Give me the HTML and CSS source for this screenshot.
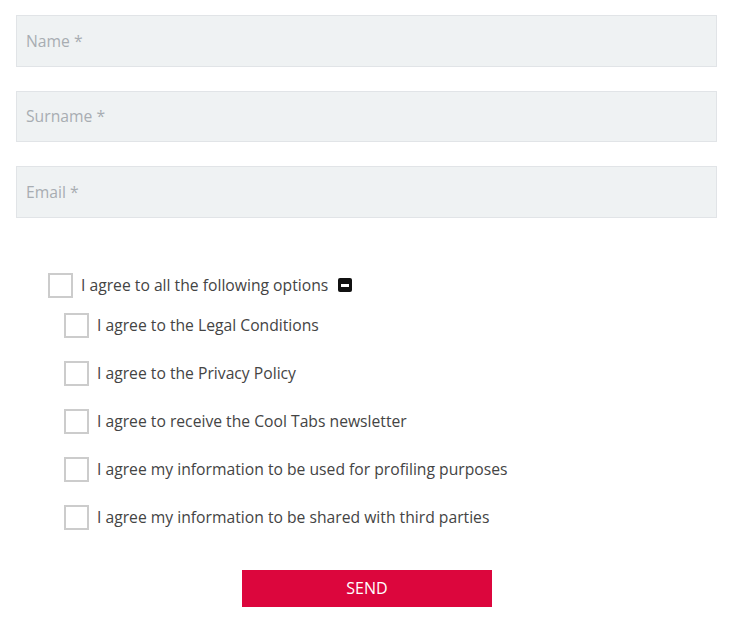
FILE: index.html
```html
<!DOCTYPE html>
<html lang="en">
<head>
<meta charset="utf-8">
<title>Form</title>
<link rel="stylesheet" href="styles.css">
</head>
<body>
<form class="form">
  <div class="fields">
    <input class="field" type="text" placeholder="Name *">
    <input class="field" type="text" placeholder="Surname *">
    <input class="field" type="email" placeholder="Email *">
  </div>
  <div class="consents">
    <label class="check check-all">
      <input class="box" type="checkbox">
      <span class="text">I agree to all the following options</span>
      <span class="toggle"><span class="bar"></span></span>
    </label>
    <div class="options">
      <label class="check"><input class="box" type="checkbox"><span class="text">I agree to the Legal Conditions</span></label>
      <label class="check"><input class="box" type="checkbox"><span class="text">I agree to the Privacy Policy</span></label>
      <label class="check"><input class="box" type="checkbox"><span class="text">I agree to receive the Cool Tabs newsletter</span></label>
      <label class="check"><input class="box" type="checkbox"><span class="text">I agree my information to be used for profiling purposes</span></label>
      <label class="check"><input class="box" type="checkbox"><span class="text">I agree my information to be shared with third parties</span></label>
    </div>
  </div>
  <div class="actions">
    <button class="send" type="button">SEND</button>
  </div>
</form>
</body>
</html>
```
FILE: styles.css
```css
html, body {
  margin: 0;
  padding: 0;
  background: #ffffff;
}
body {
  font-family: "Open Sans", "Liberation Sans", sans-serif;
  color: #444444;
}
.form {
  padding: 15px 15px 0 16px;
}
.fields {
  display: flex;
  flex-direction: column;
  gap: 24px;
}
.field {
  box-sizing: border-box;
  width: 701px;
  height: 51.5px;
  margin: 0;
  padding: 0 9px;
  border: 1px solid #e1e4e7;
  background: #eff2f3;
  font-family: inherit;
  font-size: 15.7px;
  color: #444;
  outline: none;
}
.field::placeholder {
  color: #a8adb2;
}
.consents {
  margin-top: 55px;
  padding-left: 32px;
}
.check {
  display: flex;
  align-items: center;
  height: 25px;
  font-size: 15.7px;
  color: #444;
}
.box {
  appearance: none;
  -webkit-appearance: none;
  box-sizing: border-box;
  width: 25px;
  height: 25px;
  margin: 0 8px 0 0;
  border: 2px solid #cccccc;
  background: #fff;
  flex: none;
}
.toggle {
  display: inline-flex;
  align-items: center;
  justify-content: center;
  width: 14px;
  height: 14px;
  margin-left: 10px;
  background: #111;
  border-radius: 2px;
}
.bar {
  width: 8px;
  height: 3px;
  background: #fff;
}
.options {
  margin-top: 15px;
  padding-left: 16px;
  display: flex;
  flex-direction: column;
  gap: 23px;
}
.actions {
  display: flex;
  margin-top: 40px;
  padding-left: 226px;
}
.send {
  width: 250px;
  height: 37px;
  border: none;
  background: #dc063d;
  color: #fff;
  font-family: inherit;
  font-size: 16px;
  padding: 0;
}
```
